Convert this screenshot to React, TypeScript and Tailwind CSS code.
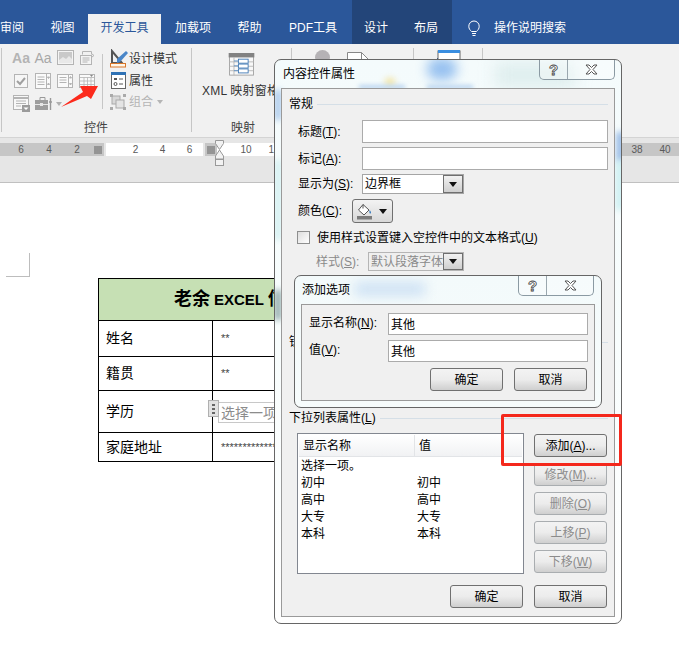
import type { ReactNode } from 'react';

function Key({ k }: { k: string }) {
  return <u className="underline underline-offset-1">{k}</u>;
}

function Lbl({ name, k, tail = '):' }: { name: string; k: string; tail?: string }) {
  return (
    <span>
      {name}(<Key k={k} />{tail}
    </span>
  );
}

function Btn({ children, off, w = 'w-[73px]' }: { children: ReactNode; off?: boolean; w?: string }) {
  return (
    <div
      className={`${w} h-[23px] rounded-[3px] border flex items-center justify-center bg-gradient-to-b from-[#f3f3f3] via-[#ececec] to-[#cfcfcf] ${
        off ? 'border-[#a9adb0] text-[#8c8c8c]' : 'border-[#707070] text-black'
      }`}
    >
      {children}
    </div>
  );
}

function DropArrow() {
  return (
    <div className="w-[20px] self-stretch border border-[#6f6f6f] bg-gradient-to-b from-[#f2f2f2] to-[#cfcfcf] flex items-center justify-center">
      <svg width="8" height="5" viewBox="0 0 8 5">
        <path d="M0 0h8L4 5z" fill="#111" />
      </svg>
    </div>
  );
}

function CaptionButtons({ w, h, split, right }: { w: string; h: string; split: string; right: string }) {
  return (
    <div className={`absolute top-0 ${right} ${w} ${h} flex border-x border-b border-[#8b9aa3] rounded-b-[5px] bg-white/30`}>
      <div className={`${split} border-r border-[#9aa7ae] flex items-center justify-center`}>
        <span className="text-[15px] leading-none font-bold text-white [-webkit-text-stroke:0.8px_#444]">?</span>
      </div>
      <div className="flex-1 flex items-center justify-center">
        <svg width="13" height="11" viewBox="0 0 13 11">
          <path
            d="M1 1h3l2.500 2.500L9 1h3L8 5.500 12 10H9L6.500 7.500 4 10H1l4-4.500z"
            fill="#fff"
            stroke="#555"
            strokeWidth="1"
          />
        </svg>
      </div>
    </div>
  );
}

function GroupLine({ label, k, line }: { label: string; k?: string; line: string }) {
  return (
    <div className="h-[16px] flex items-center ml-[7px] mr-[6px] gap-[4px]">
      <span className="leading-none">
        {label}
        {k && (
          <>
            (<Key k={k} />)
          </>
        )}
      </span>
      <div className={`flex-1 h-px ${line}`} />
    </div>
  );
}

function ContentControlDialog() {
  const rows: [string, string][] = [
    ['选择一项。', ''],
    ['初中', '初中'],
    ['高中', '高中'],
    ['大专', '大专'],
    ['本科', '本科'],
  ];
  return (
    <div className="absolute left-[274px] top-[59px] w-[348px] h-[565px] rounded-[7px] border border-[#666] overflow-hidden bg-gradient-to-b from-[#f4fbfc] via-[#f8fdfd] to-white text-[12px] text-black flex flex-col">
      {/* glass blur of what is behind the frame */}
      <div className="absolute left-[152px] top-[-2px] w-[30px] h-[22px] rounded-full bg-[#5a9be8] opacity-60 blur-[6px]" />
      <div className="absolute left-[110px] top-[18px] w-[10px] h-[8px] rounded-full bg-[#f2e3a0] blur-[3px]" />
      <div className="absolute left-[84px] top-[25px] w-[46px] h-[4px] bg-[#b8d4f0] blur-[2px]" />
      <div className="absolute left-[152px] top-[25px] w-[46px] h-[4px] bg-[#b8d4f0] blur-[2px]" />
      <div className="absolute left-[220px] top-[2px] w-[80px] h-[26px] bg-[#dfeeee] blur-[8px]" />
      <div className="absolute left-[342px] top-[72px] w-[6px] h-[30px] bg-[#7fa9e0] blur-[3px]" />
      <div className="absolute left-[341px] top-[100px] w-[7px] h-[50px] bg-[#c6eef0] blur-[3px]" />
      <div className="absolute left-0 top-[30px] w-[6px] h-[30px] bg-[#9ec0e8] blur-[3px]" />
      <div className="absolute left-0 top-[230px] w-[6px] h-[30px] bg-[#7f9d9d] blur-[3px]" />
      <div className="absolute left-0 top-[100px] w-[6px] h-[80px] bg-[#cdeef0] blur-[3px]" />

      <div className="relative h-[28px] pl-[8px] pt-[6px] leading-[16px]">内容控件属性</div>
      <CaptionButtons w="w-[76px]" h="h-[20px]" split="w-[28px]" right="right-[6px]" />

      <div className="relative mx-[6px] h-[529px] border border-[#9a9a9a] bg-[#f0f0f0] pt-[7px]">
        <GroupLine label="常规" line="bg-[#d5dfe7]" />

        <div className="mt-[8px] h-[23px] flex items-center pl-[16px]">
          <span className="w-[64px]"><Lbl name="标题" k="T" /></span>
          <div className="w-[246px] h-[23px] bg-white border border-[#ababab]" />
        </div>
        <div className="mt-[4px] h-[23px] flex items-center pl-[16px]">
          <span className="w-[64px]"><Lbl name="标记" k="A" /></span>
          <div className="w-[246px] h-[23px] bg-white border border-[#ababab]" />
        </div>
        <div className="mt-[4px] h-[20px] flex items-center pl-[16px]">
          <span className="w-[64px]"><Lbl name="显示为" k="S" /></span>
          <div className="w-[102px] h-[20px] bg-white border border-[#a5a5a5] flex items-center pl-[2px]">
            <span className="flex-1">边界框</span>
            <DropArrow />
          </div>
        </div>
        <div className="mt-[5px] h-[24px] flex items-center pl-[16px]">
          <span className="w-[54px]"><Lbl name="颜色" k="C" /></span>
          <div className="w-[41px] h-[24px] rounded-[3px] border border-[#707070] bg-gradient-to-b from-[#f3f3f3] to-[#d8d8d8] flex items-center pl-[3px] gap-[6px]">
            <svg width="17" height="17" viewBox="0 0 17 17">
              <path d="M7 1.500L13 7l-5 5-5.500-5z" fill="#fff" stroke="#555" />
              <path d="M7 1.500v4" stroke="#555" />
              <path d="M13.500 7c1.500 1.500 2 2.500 1.200 3.500-.8.500-1.700-.5-1.200-3.500z" fill="#3f7fbf" />
              <rect x="1" y="13" width="15" height="3.500" fill="#7c7c7c" />
            </svg>
            <svg width="8" height="5" viewBox="0 0 8 5">
              <path d="M0 0h8L4 5z" fill="#111" />
            </svg>
          </div>
        </div>
        <div className="mt-[8px] h-[13px] flex items-center pl-[15px] gap-[7px]">
          <div className="w-[13px] h-[13px] border border-[#8e8f8f] bg-gradient-to-br from-[#dedede] to-white" />
          <span>
            使用样式设置键入空控件中的文本格式(<Key k="U" />)
          </span>
        </div>
        <div className="mt-[8px] h-[19px] flex items-center pl-[34px] text-[#8a8a8a]">
          <span className="w-[52px]"><Lbl name="样式" k="S" /></span>
          <div className="w-[96px] h-[19px] bg-[#efefef] border border-[#b5b5b5] flex items-center pl-[2px]">
            <span className="flex-1 whitespace-nowrap">默认段落字体</span>
            <DropArrow />
          </div>
        </div>

        <div className="mt-[63px]">
          <GroupLine label="锁" line="bg-[#d5dfe7]" />
        </div>
        <div className="mt-[60px]">
          <GroupLine label="下拉列表属性" k="L" line="bg-[#d5dfe7]" />
        </div>

        <div className="mt-[7px] flex pl-[15px] gap-[10px]">
          <div className="w-[227px] h-[141px] bg-white border border-[#828790] pt-px px-px">
            <div className="flex h-[22px] border-b border-[#e2e4e7] bg-gradient-to-b from-white to-[#f1f2f4]">
              <div className="w-[116px] pl-[4px] border-r border-[#e2e4e7] flex items-center">显示名称</div>
              <div className="flex-1 pl-[4px] flex items-center">值</div>
            </div>
            <div>
              {rows.map(([a, b]) => (
                <div key={a} className="h-[17px] flex items-center pl-[2px]">
                  <span className="w-[116px]">{a}</span>
                  <span>{b}</span>
                </div>
              ))}
            </div>
          </div>
          <div className="flex flex-col gap-[6px] pt-px">
            <Btn><span>添加(<Key k="A" />)...</span></Btn>
            <Btn off><span>修改(<Key k="M" />)...</span></Btn>
            <Btn off><span>删除(<Key k="O" />)</span></Btn>
            <Btn off><span>上移(<Key k="P" />)</span></Btn>
            <Btn off><span>下移(<Key k="W" />)</span></Btn>
          </div>
        </div>

        <div className="mt-[11px] flex justify-end gap-[11px] pr-[7px]">
          <Btn>确定</Btn>
          <Btn>取消</Btn>
        </div>
      </div>

      {/* nested 添加选项 dialog */}
      <div className="absolute left-[19px] top-[215px] w-[308px] h-[133px] rounded-[7px] border border-[#666] overflow-hidden bg-gradient-to-b from-[#f3fafb] to-[#f7fcfc]">
        <div className="absolute left-[60px] top-[6px] w-[70px] h-[14px] bg-[#cfe2f4] blur-[6px]" />
        <div className="relative h-[28px] pl-[7px] pt-[6px] leading-[16px]">添加选项</div>
        <CaptionButtons w="w-[76px]" h="h-[20px]" split="w-[28px]" right="right-[7px]" />
        <div className="relative mx-[6px] h-[97px] border border-[#9a9a9a] bg-[#f0f0f0] pt-[8px]">
          <div className="flex h-[22px] pl-[7px]">
            <span className="w-[79px] pt-[1px]"><Lbl name="显示名称" k="N" /></span>
            <div className="w-[200px] h-[22px] bg-white border border-[#ababab] pl-[2px] leading-[22px]">其他</div>
          </div>
          <div className="flex h-[22px] mt-[5px] pl-[7px]">
            <span className="w-[79px] pt-[1px]"><Lbl name="值" k="V" /></span>
            <div className="w-[200px] h-[22px] bg-white border border-[#ababab] pl-[2px] leading-[22px]">其他</div>
          </div>
          <div className="mt-[6px] flex justify-end gap-[11px] pr-[7px]">
            <Btn>确定</Btn>
            <Btn>取消</Btn>
          </div>
        </div>
      </div>
    </div>
  );
}

function Sep({ cls }: { cls: string }) {
  return <div className={`w-px bg-[#c6c6c6] ${cls}`} />;
}

function DisabledIcon({ kind }: { kind: string }) {
  const s = '#b4b4b4';
  switch (kind) {
    case 'aa':
      return <span className="text-[14px] font-bold leading-none text-[#b4b4b4]">Aa</span>;
    case 'aa2':
      return <span className="text-[14px] leading-none text-[#a8a8a8]">Aa</span>;
    case 'pic':
      return (
        <svg width="17" height="15" viewBox="0 0 17 15">
          <rect x=".5" y=".5" width="16" height="14" fill="#f4f4f4" stroke={s} />
          <rect x="2" y="2" width="13" height="11" fill="#c9c9c9" />
          <path d="M2 10l4-3 3 2 3-3 3 3v4H2z" fill="#e8e8e8" />
        </svg>
      );
    case 'block':
      return (
        <svg width="16" height="16" viewBox="0 0 16 16" fill="none" stroke={s}>
          <path d="M3.500 1.500h9v3M3.500 1.500v3" />
          <rect x="1.500" y="5.500" width="11" height="9" fill="#f4f4f4" />
          <path d="M3.500 8h7M3.500 10h7M3.500 12h5M13 4l2 1.500-2 1.500" />
        </svg>
      );
    case 'check':
      return (
        <svg width="14" height="14" viewBox="0 0 14 14">
          <rect x=".5" y=".5" width="13" height="13" fill="#f6f6f6" stroke={s} />
          <path d="M3 7l3 3 5-6" fill="none" stroke="#a0a0a0" strokeWidth="2" />
        </svg>
      );
    case 'combo':
      return (
        <svg width="16" height="16" viewBox="0 0 16 16" fill="none" stroke={s}>
          <rect x=".5" y=".5" width="15" height="15" fill="#fafafa" />
          <path d="M11.500 1v14M2.500 4h7M2.500 6.500h7M2.500 9h7M2.500 11.500h7" />
          <path d="M12.500 4h2l-1 1.500zM12.500 11.500h2l-1-1.500z" fill={s} />
        </svg>
      );
    case 'list':
      return (
        <svg width="16" height="14" viewBox="0 0 16 14" fill="none" stroke={s}>
          <rect x=".5" y=".5" width="15" height="13" fill="#fafafa" />
          <path d="M11.500 1v12M2.500 3.500h7M2.500 6h7M2.500 8.500h7" />
          <path d="M12.500 4h2l-1-1.500zM12.500 9.500h2l-1 1.500z" fill={s} />
        </svg>
      );
    case 'date':
      return (
        <svg width="16" height="14" viewBox="0 0 16 14" fill="none" stroke={s}>
          <rect x=".5" y=".5" width="15" height="13" fill="#fafafa" />
          <path d="M1 3.500h14M1 7h14M1 10.500h14M5 3.500v10M8.500 3.500v10M12 3.500v10" strokeWidth=".8" />
          <path d="M11 1h3l-1.500 2z" fill="#888" stroke="none" />
        </svg>
      );
    case 'legacy':
      return (
        <svg width="17" height="17" viewBox="0 0 17 17" fill="none" stroke={s}>
          <rect x=".5" y=".5" width="15" height="14" fill="#f8f8f8" />
          <path d="M1 3h14" strokeWidth="2" />
          <path d="M3 6h10M3 8.500h10M3 11h5" />
          <rect x="9" y="10" width="8" height="7" fill="#9b9b9b" stroke="none" />
          <path d="M10.500 12.500h5l-2.500 2.500z" fill="#fff" stroke="none" />
        </svg>
      );
    case 'tool':
      return (
        <span className="flex items-center gap-[3px]">
          <svg width="18" height="16" viewBox="0 0 18 16">
            <path d="M5 4V1.500h5V4" fill="none" stroke="#999" />
            <rect x="0" y="4" width="13" height="10" fill="#9d9d9d" />
            <rect x="0" y="8" width="13" height="1" fill="#e6e6e6" />
            <rect x="5" y="7" width="3" height="3" fill="#e6e6e6" />
            <path d="M15.500 2v4M14 6h3M15.500 6v8" stroke="#999" strokeWidth="1.400" />
          </svg>
          <svg width="6" height="4" viewBox="0 0 6 4">
            <path d="M0 0h6L3 4z" fill="#b0b0b0" />
          </svg>
        </span>
      );
    default:
      return null;
  }
}

function ControlsGroup() {
  const grid = ['aa', 'aa2', 'pic', 'block', 'check', 'combo', 'list', 'date', 'legacy', 'tool'];
  return (
    <div className="w-[189px] flex flex-col">
      <div className="flex h-[69px] pt-[2px]">
        <div className="w-[100px] pl-[8px] pr-[4px] grid grid-cols-[22px_22px_22px_22px] auto-rows-[23px]">
          {grid.map((g) => (
            <div key={g} className={g === 'tool' ? 'flex items-center pl-[3px]' : 'flex items-center justify-center'}>
              <DisabledIcon kind={g} />
            </div>
          ))}
        </div>
        <Sep cls="h-[55px] mt-[8px]" />
        <div className="ml-[7px] pt-[2px] flex flex-col">
          <div className="h-[23px] flex items-center">
            <svg width="19" height="19" viewBox="0 0 19 19">
              <path d="M2 2v12h10z" fill="none" stroke="#555" strokeWidth="2" />
              <path d="M7 10l9-8 2 2-8 9-3 1z" fill="#4a86c8" />
              <rect x=".5" y="14.500" width="15" height="3.500" fill="#fff6e8" stroke="#d9772a" />
            </svg>
            <span>设计模式</span>
          </div>
          <div className="h-[23px] flex items-center gap-[3px] pl-[1px]">
            <svg width="15" height="17" viewBox="0 0 15 17">
              <rect x=".5" y=".5" width="14" height="16" fill="#fff" stroke="#666" />
              <rect x="0" y="0" width="15" height="3" fill="#2f72b5" />
              <rect x="3" y="6" width="3" height="2" fill="#555" />
              <path d="M8 7h4M8 12h4" stroke="#555" />
              <circle cx="4.500" cy="12" r="1.500" fill="none" stroke="#555" />
            </svg>
            <span>属性</span>
          </div>
          <div className="h-[23px] flex items-center gap-[3px] text-[#b5b5b5]">
            <svg width="16" height="16" viewBox="0 0 16 16">
              <rect x="2" y="2" width="8" height="8" fill="#d8d8d8" stroke="#aaa" />
              <rect x="6" y="6" width="8" height="8" fill="#e4e4e4" stroke="#aaa" />
              <path d="M0 0h3v3H0zM13 0h3v3h-3zM0 13h3v3H0zM13 13h3v3h-3z" fill="#aaa" />
            </svg>
            <span>组合</span>
            <svg width="6" height="4" viewBox="0 0 6 4" className="ml-[1px]">
              <path d="M0 0h6L3 4z" fill="#b5b5b5" />
            </svg>
          </div>
        </div>
      </div>
      <div className="flex-1 text-center text-[#444] pt-[6px] pr-[1px]">控件</div>
    </div>
  );
}

function MappingGroup() {
  return (
    <div className="w-[99px] flex flex-col items-start">
      <svg width="29" height="26" viewBox="0 0 29 26" className="ml-[35px] mt-[9px]">
        <rect x="1" y="1" width="27" height="24" fill="#f8f8f8" stroke="#a0a0a0" />
        <rect x="0" y="0" width="29" height="5" fill="#828282" />
        <path d="M6 5v20M1 10h27M1 15h27M1 20h27" stroke="#b5b5b5" />
        <path d="M6 9h5M6 14.500h5M6 20h5" stroke="#5a8ec4" />
        <rect x="11" y="7" width="11" height="4.500" fill="#fff" stroke="#3f78b4" />
        <rect x="11" y="12.500" width="11" height="4.500" fill="#fff" stroke="#3f78b4" />
        <rect x="11" y="18" width="11" height="4.500" fill="#fff" stroke="#3f78b4" />
      </svg>
      <div className="ml-[10px] mt-[6px] whitespace-nowrap tracking-[0.2px]">XML 映射窗格</div>
      <div className="ml-[39px] mt-[19px] text-[#444]">映射</div>
    </div>
  );
}

function RulerGrid() {
  return (
    <svg width="8" height="8" viewBox="0 0 8 8">
      <path d="M0 1h8M0 3h8M0 5h8M0 7h8M1 0v8M3 0v8M5 0v8M7 0v8" stroke="#7a7a7a" strokeWidth=".8" />
    </svg>
  );
}

function RulerNum({ n }: { n: string }) {
  return <span className="w-[28px] text-center">{n}</span>;
}

function Ruler() {
  return (
    <div className="h-[46px] bg-[#e6e6e6] border-t border-[#d4d4d4] border-b border-b-[#c0c0c0] pt-[5px] relative">
      <div className="h-[13px] flex text-[10px] leading-[13px] text-[#5a5a5a]">
        <div className="w-[104px] bg-[#c6c6c6] flex items-center pl-[7px]">
          <RulerNum n="6" />
          <RulerNum n="4" />
          <RulerNum n="2" />
          <span className="ml-[3px]"><RulerGrid /></span>
        </div>
        <div className="w-[97px] ml-[2px] bg-white flex items-center pl-[16px]">
          <RulerNum n="2" />
          <RulerNum n="4" />
          <RulerNum n="6" />
        </div>
        <div className="w-[12px] ml-[2px] bg-[#c6c6c6] flex items-center justify-center"><RulerGrid /></div>
        <div className="flex-1 bg-white flex items-center pl-[15px]">
          <RulerNum n="10" />
          <RulerNum n="12" />
        </div>
        <div className="w-[60px] bg-[#c6c6c6] flex items-center pl-[4px]">
          <RulerNum n="38" />
          <RulerNum n="40" />
        </div>
      </div>
      {/* indent markers */}
      <svg width="10" height="26" viewBox="0 0 10 26" className="absolute left-[215px] top-[2px]">
        <path d="M.5.500h8v3L4.500 9.500l-4-6z" fill="#f2f2f2" stroke="#999" />
        <path d="M4.500 10l4 6v3h-8v-3z" fill="#f2f2f2" stroke="#999" />
        <rect x=".5" y="19.500" width="8" height="6" fill="#f2f2f2" stroke="#999" />
      </svg>
    </div>
  );
}

function DocTable() {
  const cell = 'border border-black';
  return (
    <div className="ml-[98px] mt-[1px] w-[176px] overflow-hidden">
      <table className="w-[292px] border-collapse border border-black text-[14px] text-black table-fixed">
        <colgroup>
          <col className="w-[114px]" />
          <col />
        </colgroup>
        <tbody>
          <tr className="h-[42px] bg-[#c6e0b4]">
            <td colSpan={2} className={`${cell} pl-[75px] font-semibold whitespace-nowrap overflow-hidden`}>
              <span className="text-[18px]">老余</span> <span className="text-[15px]">EXCEL</span> <span className="text-[18px]">信</span>
            </td>
          </tr>
          <tr className="h-[36px]">
            <td className={`${cell} pl-[7px]`}>姓名</td>
            <td className={`${cell} pl-[8px] text-[11px] text-[#444]`}>**</td>
          </tr>
          <tr className="h-[34px]">
            <td className={`${cell} pl-[7px]`}>籍贯</td>
            <td className={`${cell} pl-[8px] text-[11px] text-[#444]`}>**</td>
          </tr>
          <tr className="h-[42px]">
            <td className={`${cell} pl-[7px]`}>学历</td>
            <td className={`${cell} relative pl-[5px] pt-[2px]`}>
              <div className="absolute left-[-5px] top-[9px] w-[11px] h-[17px] bg-[#e2e2e2] border border-[#b0b0b0] flex flex-col items-center justify-center gap-[2px]">
                <span className="w-[3px] h-[2px] bg-[#666]" />
                <span className="w-[3px] h-[2px] bg-[#666]" />
                <span className="w-[3px] h-[2px] bg-[#666]" />
              </div>
              <div className="h-[21px] w-[120px] border border-[#c8c8c8] text-[#8c8c8c] pl-[2px] leading-[20px] whitespace-nowrap">选择一项</div>
            </td>
          </tr>
          <tr className="h-[29px]">
            <td className={`${cell} pl-[7px]`}>家庭地址</td>
            <td className={`${cell} pl-[8px] text-[11px] text-[#444] whitespace-nowrap overflow-hidden`}>*************</td>
          </tr>
        </tbody>
      </table>
    </div>
  );
}

export default function App() {
  return (
    <div className="relative w-[679px] h-[671px] overflow-hidden bg-white font-['Liberation_Sans','Noto_Sans_CJK_SC',sans-serif] text-[12px] text-[#333]">
      {/* Title / tab strip */}
      <div className="h-[44px] bg-[#2b579a] flex text-white">
        <div className="w-[36px] pt-[20px] leading-[16px] whitespace-nowrap overflow-hidden">审阅</div>
        <div className="w-[52px] pt-[20px] leading-[16px] text-center pl-[1px]">视图</div>
        <div className="w-[73px] mt-[14px] bg-[#f1f1f1] text-[#2b579a] pt-[6px] leading-[16px] text-center">开发工具</div>
        <div className="w-[64px] pt-[20px] leading-[16px] text-center">加载项</div>
        <div className="w-[49px] pt-[20px] leading-[16px] text-center">帮助</div>
        <div className="w-[78px] pt-[20px] leading-[16px] text-center">PDF工具</div>
        <div className="w-[100px] bg-[#234579] flex">
          <div className="w-[48px] pt-[20px] leading-[16px] text-center">设计</div>
          <div className="w-[52px] pt-[20px] leading-[16px] text-center">布局</div>
        </div>
        <div className="ml-[16px] pt-[20px] flex items-start gap-[14px]">
          <svg width="12" height="17" viewBox="0 0 12 17" fill="none" stroke="#fff" strokeWidth="1">
            <path d="M3.500 11.500C2 10 .8 8.800.8 6.200a5.200 5.200 0 0 1 10.400 0c0 2.600-1.200 3.800-2.700 5.300z" />
            <path d="M4 13.500h4M4.500 15.500h3" />
          </svg>
          <span className="leading-[16px]">操作说明搜索</span>
        </div>
      </div>

      {/* Ribbon */}
      <div className="h-[93px] bg-[#f1f1f1] flex">
        <div className="w-[1px]" />
        <Sep cls="h-[84px] mt-[4px]" />
        <ControlsGroup />
        <Sep cls="h-[84px] mt-[4px]" />
        <MappingGroup />
        <Sep cls="h-[84px] mt-[4px]" />
        <div className="w-[121px] pt-[6px] pl-[23px] flex items-start gap-[17px]">
          <div className="w-[15px] h-[15px] rounded-full bg-[#b5b2b5]" />
          <svg width="22" height="12" viewBox="0 0 22 12" className="mt-[2px]">
            <path d="M.5 11.500V.5h14l7 7v4" fill="#fff" stroke="#888" />
            <path d="M14.500.5v7h7" fill="none" stroke="#888" />
          </svg>
        </div>
        <Sep cls="h-[84px] mt-[4px]" />
        <div className="w-[68px] pl-[23px] pt-[6px]">
          <svg width="24" height="12" viewBox="0 0 24 12">
            <path d="M0 9h15" stroke="#1f4e9c" strokeWidth="2" />
            <rect x="1" y="1" width="22" height="11" fill="#fff" stroke="#666" />
            <rect x="1" y="0" width="22" height="3" fill="#3a8ee0" />
          </svg>
        </div>
        <Sep cls="h-[84px] mt-[4px]" />
        <div className="flex-1" />
      </div>

      <Ruler />

      {/* Document page */}
      <div>
        <div className="mt-[70px] ml-[6px] w-[24px] h-[24px] border-r border-b border-[#bdbdbd]" />
        <DocTable />
      </div>

      {/* annotation arrow pointing at 属性 */}
      <svg width="40" height="24" viewBox="0 0 40 24" className="absolute left-[60px] top-[85px]">
        <path d="M38 1H20l3 6L1 22l26-11 4 3z" fill="#fc2a1c" />
      </svg>

      <ContentControlDialog />

      {/* red highlight around 添加 */}
      <div className="absolute left-[501px] top-[414px] w-[121px] h-[52px] border-[3px] border-[#f4281c] rounded-[2px]" />
    </div>
  );
}
